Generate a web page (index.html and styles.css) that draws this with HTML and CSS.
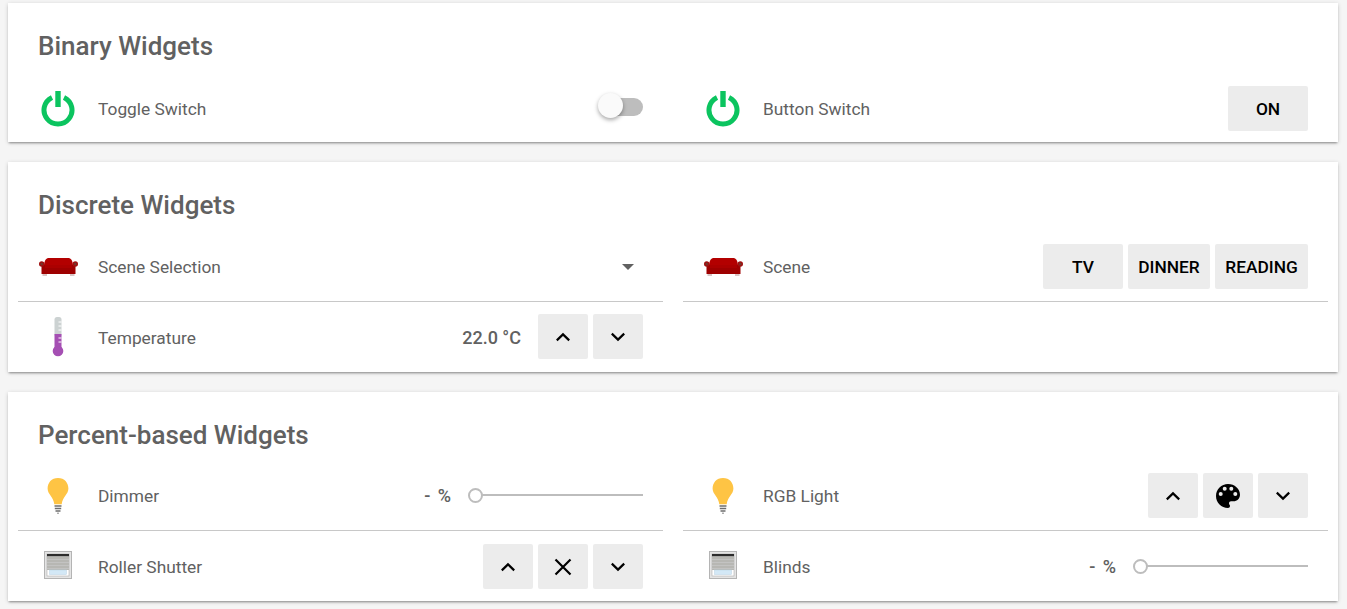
FILE: index.html
```html
<!DOCTYPE html>
<html lang="en">
<head>
<meta charset="utf-8">
<title>Widgets</title>
<link rel="stylesheet" href="styles.css">
</head>
<body>
<svg class="defs" width="0" height="0" aria-hidden="true">
  <defs>
    <symbol id="power" viewBox="0 0 34 36">
      <path d="M11 6.400A14 14 0 1 0 23 6.400" fill="none" stroke="#0bc45f" stroke-width="5"/>
      <rect x="14.300" y="0" width="5.400" height="16" fill="#0bc45f"/>
    </symbol>
    <symbol id="sofa" viewBox="0 0 39 18">
      <path d="M5 7C5.500 2.500 7 0 10 0H29C32 0 33.500 2.500 34 7V9H5Z" fill="#b30000"/>
      <path d="M2.500 7H36.500V16H2.500Z" fill="#9e0000"/>
      <rect x="6" y="7" width="27" height="3" fill="#ab0000"/>
      <circle cx="2.700" cy="6" r="2.700" fill="#a01010"/>
      <circle cx="36.300" cy="6" r="2.700" fill="#a01010"/>
      <circle cx="2.700" cy="6" r="1.200" fill="#6e3a30"/>
      <circle cx="36.300" cy="6" r="1.200" fill="#6e3a30"/>
      <rect x="3.500" y="16" width="4.500" height="2" fill="#d8c4c4"/>
      <rect x="31" y="16" width="4.500" height="2" fill="#d8c4c4"/>
    </symbol>
    <symbol id="thermo" viewBox="0 0 12 41">
      <rect x="2.500" y="1" width="7" height="20" rx="2.500" fill="#ccd2d2"/>
      <rect x="2.500" y="18" width="7" height="16" fill="#a54fb3"/>
      <circle cx="6" cy="35" r="5.300" fill="#a54fb3"/>
      <path d="M6.500 6H9.500M6.500 10H9.500M6.500 14H9.500M6.500 22H9.500M6.500 26H9.500" stroke="#fff" stroke-width="1"/>
    </symbol>
    <symbol id="bulb" viewBox="0 0 22 36">
      <path d="M11 0C4.500 0 .6 4.800 .6 10.500C.6 16.500 6.500 18.500 7.300 26.300H14.700C15.500 18.500 21.400 16.500 21.400 10.500C21.400 4.800 17.500 0 11 0Z" fill="#fec444"/>
      <path d="M7.500 28H14.500M7.800 30.500H14.200M8.500 33H13.500" stroke="#6d6d6d" stroke-width="1.300"/>
      <path d="M10 35.200H12" stroke="#8a8a8a" stroke-width="1"/>
    </symbol>
    <symbol id="blinds" viewBox="0 0 28 28">
      <rect x="0.500" y="0.500" width="27" height="27" fill="#e4e4e4" stroke="#b4b4b4"/>
      <rect x="3" y="3" width="22" height="22" fill="#fff" stroke="#a0a0a0" stroke-width="0.500"/>
      <rect x="3" y="3" width="22" height="2.500" fill="#2c2c2c"/>
      <rect x="3" y="5.500" width="22" height="13.500" fill="#b7b7b3"/>
      <path d="M3 8.500H25M3 11.500H25M3 14.500H25M3 17.500H25" stroke="#c9c9c9" stroke-width="0.700"/>
      <rect x="5.500" y="19" width="17" height="4.500" fill="#d3e8f6" stroke="#b9d2e2" stroke-width="0.500"/>
    </symbol>
    <symbol id="up" viewBox="0 0 16 10"><path d="M1.800 8.400L8 2.400L14.200 8.400" fill="none" stroke="#000" stroke-width="2.200"/></symbol>
    <symbol id="down" viewBox="0 0 16 10"><path d="M1.800 1.600L8 7.600L14.200 1.600" fill="none" stroke="#000" stroke-width="2.200"/></symbol>
    <symbol id="close" viewBox="0 0 18 18"><path d="M1.500 1.500L16.500 16.500M16.500 1.500L1.500 16.500" fill="none" stroke="#000" stroke-width="2.200"/></symbol>
    <symbol id="palette" viewBox="0 0 24 24"><path fill="#000" fill-rule="evenodd" d="M12 0C5.400 0 0 5.400 0 12s5.400 12 12 12c1.100 0 2-.9 2-2 0-.5-.2-1-.5-1.300-.3-.4-.5-.9-.5-1.400 0-1.100.9-2 2-2h2.400c3.700 0 6.600-3 6.600-6.600C24 4.800 18.600 0 12 0ZM4.700 12a2 2 0 1 1 0-4 2 2 0 0 1 0 4Zm4-5.300a2 2 0 1 1 0-4 2 2 0 0 1 0 4Zm6.600 0a2 2 0 1 1 0-4 2 2 0 0 1 0 4Zm4 5.300a2 2 0 1 1 0-4 2 2 0 0 1 0 4Z"/></symbol>
  </defs>
</svg>

<main class="page">
  <section class="card card-binary">
    <h2 class="title">Binary Widgets</h2>
    <div class="grid">
      <div class="row last">
        <div class="icon-cell"><svg class="i-power"><use href="#power"/></svg></div>
        <span class="label">Toggle Switch</span>
        <div class="toggle"><span class="thumb"></span></div>
      </div>
      <div class="row last">
        <div class="icon-cell"><svg class="i-power"><use href="#power"/></svg></div>
        <span class="label">Button Switch</span>
        <div class="btns"><button class="btn wide">ON</button></div>
      </div>
    </div>
  </section>

  <section class="card card-discrete">
    <h2 class="title">Discrete Widgets</h2>
    <div class="grid">
      <div class="row">
        <div class="icon-cell"><svg class="i-sofa"><use href="#sofa"/></svg></div>
        <span class="label">Scene Selection</span>
        <span class="caret"></span>
      </div>
      <div class="row">
        <div class="icon-cell"><svg class="i-sofa"><use href="#sofa"/></svg></div>
        <span class="label">Scene</span>
        <div class="btns">
          <button class="btn wide">TV</button>
          <button class="btn dinner">DINNER</button>
          <button class="btn reading">READING</button>
        </div>
      </div>
      <div class="row last row-temp">
        <div class="icon-cell"><svg class="i-thermo"><use href="#thermo"/></svg></div>
        <span class="label">Temperature</span>
        <span class="value">22.0 °C</span>
        <div class="btns">
          <button class="btn"><svg class="i-chev"><use href="#up"/></svg></button>
          <button class="btn"><svg class="i-chev"><use href="#down"/></svg></button>
        </div>
      </div>
    </div>
  </section>

  <section class="card card-percent">
    <h2 class="title">Percent-based Widgets</h2>
    <div class="grid">
      <div class="row">
        <div class="icon-cell"><svg class="i-bulb"><use href="#bulb"/></svg></div>
        <span class="label">Dimmer</span>
        <span class="value pct">- %</span>
        <div class="slider"><span class="knob"></span></div>
      </div>
      <div class="row">
        <div class="icon-cell"><svg class="i-bulb"><use href="#bulb"/></svg></div>
        <span class="label">RGB Light</span>
        <div class="btns">
          <button class="btn"><svg class="i-chev"><use href="#up"/></svg></button>
          <button class="btn"><svg class="i-palette"><use href="#palette"/></svg></button>
          <button class="btn"><svg class="i-chev"><use href="#down"/></svg></button>
        </div>
      </div>
      <div class="row last">
        <div class="icon-cell"><svg class="i-blinds"><use href="#blinds"/></svg></div>
        <span class="label">Roller Shutter</span>
        <div class="btns">
          <button class="btn"><svg class="i-chev"><use href="#up"/></svg></button>
          <button class="btn"><svg class="i-close"><use href="#close"/></svg></button>
          <button class="btn"><svg class="i-chev"><use href="#down"/></svg></button>
        </div>
      </div>
      <div class="row last">
        <div class="icon-cell"><svg class="i-blinds"><use href="#blinds"/></svg></div>
        <span class="label">Blinds</span>
        <span class="value pct">- %</span>
        <div class="slider"><span class="knob"></span></div>
      </div>
    </div>
  </section>
</main>
</body>
</html>
```
FILE: styles.css
```css
* { box-sizing: border-box; }
html, body { margin: 0; padding: 0; height: 100%; overflow: hidden; }
body {
  background: #f5f5f5;
  font-family: Roboto, "Liberation Sans", sans-serif;
  color: #616161;
}
.defs { position: absolute; }
.page {
  display: flex;
  flex-direction: column;
  gap: 20px;
  padding: 3px 9px 0 8px;
}
.card {
  background: #fff;
  padding: 0 10px;
  box-shadow: 0 2px 2px -1px rgba(0,0,0,.35), 0 1px 4px rgba(0,0,0,.18);
}
.card-binary { height: 139px; }
.card-discrete { height: 210px; }
.card-percent { height: 209px; }
.title {
  margin: 0;
  padding: 28px 20px 0;
  height: 71px;
  font-size: 26px;
  line-height: 30px;
  font-weight: 500;
  color: #616161;
}
.card-discrete .title { height: 70px; }
.card-percent .title { height: 69px; }
.card-percent .row.last { margin-top: 1px; }
.grid {
  display: grid;
  grid-template-columns: 645px 645px;
  column-gap: 20px;
}
.row {
  display: flex;
  align-items: center;
  height: 70px;
  padding-right: 20px;
  border-bottom: 1px solid #c8c8c8;
}
.row.last { border-bottom-color: transparent; }
.icon-cell {
  flex: 0 0 80px;
  display: flex;
  align-items: center;
  justify-content: center;
}
.label { flex: 1; font-size: 17.33px; line-height: 20px; }
.value {
  font-size: 18px;
  font-weight: 500;
  margin-right: 17px;
}
.value.pct { margin-right: 24px; word-spacing: 3px; }
.row-temp .label, .row-temp .value { margin-top: 2px; }
.btns { display: flex; gap: 5px; }
.btn {
  width: 50px;
  height: 45px;
  padding: 0;
  border: 0;
  border-radius: 2px;
  background: #ececec;
  color: #000;
  font-family: inherit;
  font-size: 17.33px;
  font-weight: 500;
  display: flex;
  align-items: center;
  justify-content: center;
}
.btn.wide { width: 80px; }
.btn.dinner { width: 82px; }
.btn.reading { width: 93px; }
.i-power { width: 34px; height: 36px; }
.i-sofa { width: 39px; height: 18px; }
.i-thermo { width: 12px; height: 41px; }
.i-bulb { width: 22px; height: 36px; }
.i-blinds { width: 28px; height: 28px; margin-bottom: 3px; }
.i-chev { width: 16px; height: 10px; }
.i-close { width: 18px; height: 18px; }
.i-palette { width: 24px; height: 24px; }
.toggle {
  position: relative;
  width: 35px;
  height: 18px;
  margin-bottom: 3px;
  border-radius: 9px;
  background: #bdbdbd;
}
.thumb {
  position: absolute;
  left: -10px;
  top: -5px;
  width: 25px;
  height: 25px;
  border-radius: 50%;
  background: #fafafa;
  box-shadow: 0 2px 4px rgba(0,0,0,.35);
}
.caret {
  width: 0;
  height: 0;
  margin-right: 9px;
  border-left: 6px solid transparent;
  border-right: 6px solid transparent;
  border-top: 6px solid #616161;
}
.slider {
  position: relative;
  width: 168px;
  height: 2px;
  margin-bottom: 1px;
  background: #bdbdbd;
}
.knob {
  position: absolute;
  left: -7px;
  top: -6px;
  width: 15px;
  height: 15px;
  border-radius: 50%;
  background: #fff;
  border: 2px solid #bdbdbd;
}
```
